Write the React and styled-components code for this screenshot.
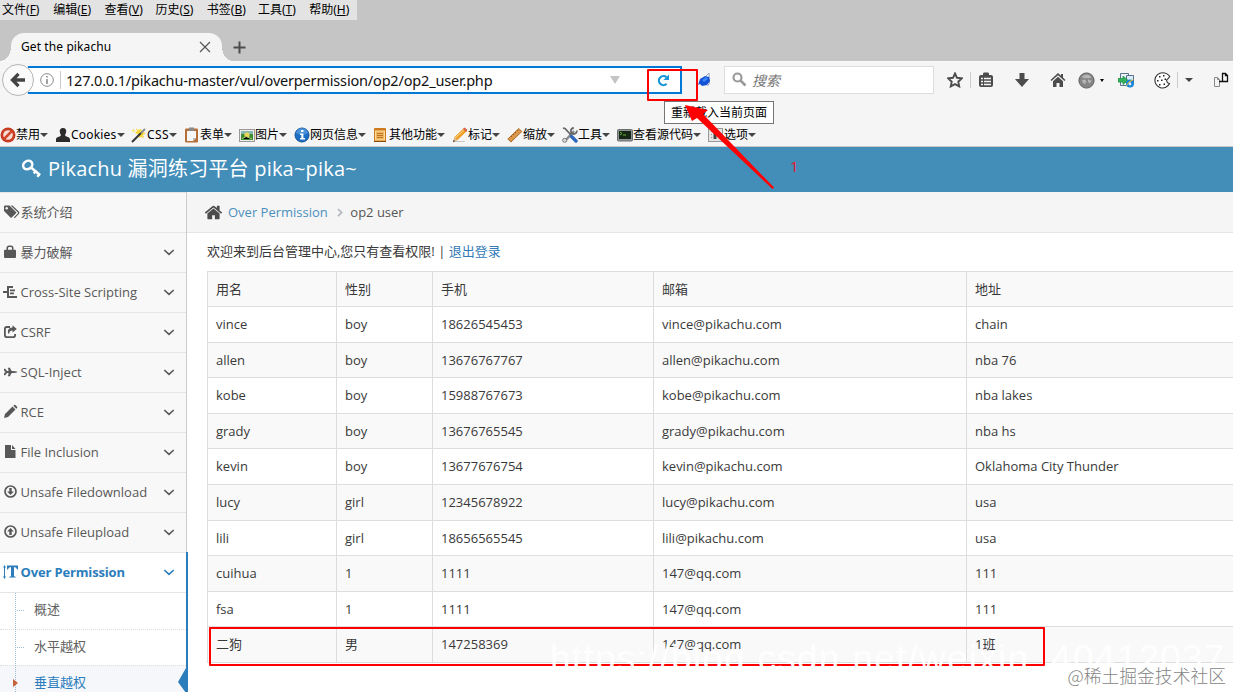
import React from "react";
import styled, { createGlobalStyle, css } from "styled-components";

const GlobalStyle = createGlobalStyle`
  * {
    box-sizing: border-box;
  }

  body {
    margin: 0;
    overflow: hidden;
    background: #fff;
    font-family: "Open Sans", "Noto Sans CJK SC", sans-serif;
    font-size: 13px;
    color: #393939;
  }
`;

const Window = styled.div`
  position: relative;
  display: flex;
  flex-direction: column;
  width: 1233px;
  height: 692px;
  overflow: hidden;
`;

/* browser chrome */

const TitleArea = styled.div`
  height: 61px;
  background: #c5c5c5;
  font-family: "Noto Sans", "Noto Sans CJK SC", sans-serif;
  color: #000;
`;

const MenuBar = styled.div`
  display: flex;
  align-items: center;
  width: 357px;
  height: 20px;
  padding-left: 2px;
  background: #e3e3e3;
  font-size: 12px;
`;

const MenuEntry = styled.div`
  flex: none;
  width: 51.2px;
  line-height: 20px;
  white-space: nowrap;
`;

const TabStrip = styled.div`
  display: flex;
  align-items: center;
  height: 41px;
  padding: 13px 0 0 11px;
`;

const Tab = styled.div`
  position: relative;
  display: flex;
  align-items: center;
  justify-content: space-between;
  width: 211px;
  height: 28px;
  padding: 0 11px 0 10px;
  background: #f5f5f5;
  border-radius: 13px 13px 0 0;
  font-size: 12px;

  &::before,
  &::after {
    content: "";
    position: absolute;
    bottom: 0;
    width: 11px;
    height: 14px;
  }

  &::before {
    left: -11px;
    background: radial-gradient(ellipse 11px 14px at 0 0, #c5c5c5 98%, #f5f5f5);
  }

  &::after {
    right: -11px;
    background: radial-gradient(
      ellipse 11px 14px at 100% 0,
      #c5c5c5 98%,
      #f5f5f5
    );
  }
`;

const TabTitle = styled.span`
  padding-bottom: 2px;
  letter-spacing: 0.1px;
`;

const NewTab = styled.svg`
  margin-left: 11px;
`;

const NavBar = styled.div`
  display: flex;
  align-items: center;
  height: 62px;
  padding: 2px 0 27px 2px;
  background: #f5f5f5;
  border-top: 1px solid #f9f9f9;
`;

const BackButton = styled.div`
  z-index: 1;
  display: flex;
  align-items: center;
  justify-content: center;
  flex: none;
  width: 32px;
  height: 32px;
  border: 1px solid #b5b5b5;
  border-radius: 50%;
  background: #fafafa;
`;

const AddressBar = styled.div`
  display: flex;
  align-items: center;
  flex: none;
  width: 654px;
  height: 28px;
  margin-left: -6px;
  padding-left: 12px;
  border: 2px solid #0078d7;
  border-left: none;
  background: #fff;
`;

const AddressDivider = styled.div`
  width: 1px;
  height: 18px;
  margin: 0 5px 0 6px;
  background: #ccc;
`;

const Url = styled.span`
  flex: 1;
  font-family: "Noto Sans", sans-serif;
  font-size: 14.5px;
  letter-spacing: -0.18px;
  color: #111;
  white-space: nowrap;
`;

const Dropmark = styled.i`
  flex: none;
  width: 0;
  height: 0;
  border: solid transparent;
  border-width: ${(props) => props.$tall || props.$size}px
    ${(props) => props.$size}px 0;
  border-top-color: ${(props) => props.$color || "#444"};
`;

const ReloadSlot = styled.div`
  display: flex;
  width: 60px;
  padding-left: 37px;
`;

const Plugin = styled.div`
  display: flex;
  width: 42px;
  padding-left: 14px;
`;

const SearchBox = styled.div`
  display: flex;
  align-items: center;
  gap: 5px;
  width: 210px;
  height: 28px;
  padding: 0 0 1px 7px;
  border: 1px solid #ddd;
  background: #fff;
  font-size: 14px;
  font-style: italic;
  color: #777;
`;

const NavIcons = styled.div`
  display: flex;
  align-items: center;
  height: 28px;
`;

const NavIcon = styled.div`
  display: flex;
  align-items: center;
  flex: none;
  margin-left: ${(props) => props.$gap}px;
`;

const NavLine = styled.div`
  width: 1px;
  height: 16px;
  margin-left: ${(props) => props.$gap}px;
  background: #ccc;
`;

const DevBar = styled.div`
  display: flex;
  align-items: center;
  height: 24px;
  background: #f5f5f5;
  border-bottom: 1px solid #c8c8c8;
  font-family: "Noto Sans", "Noto Sans CJK SC", sans-serif;
  font-size: 12px;
  color: #000;
`;

const DevItem = styled.div`
  display: flex;
  align-items: center;
  flex: none;
  width: ${(props) => props.$width}px;
  line-height: 20px;
  white-space: nowrap;
  letter-spacing: ${(props) => props.$spacing || 0}px;

  svg {
    flex: none;
  }
`;

/* the web page */

const Banner = styled.header`
  display: flex;
  align-items: center;
  gap: 7px;
  height: 45px;
  padding: 0 0 4px 21px;
  background: #438eb9;
  color: #fff;
  font-size: 20px;
  letter-spacing: 0.2px;
  white-space: nowrap;
`;

const Content = styled.div`
  display: flex;
  height: 500px;
`;

const Sidebar = styled.nav`
  flex: none;
  width: 188px;
`;

const SideGroup = styled.div`
  width: 187px;
  background: #f8f8f8;
  border-right: 1px solid #ccc;
`;

const SideItem = styled.div`
  display: flex;
  align-items: center;
  height: 40px;
  padding: 0 11px 1px 3px;
  border-top: 1px solid #e5e5e5;
  color: #585858;
  white-space: nowrap;

  span {
    flex: 1;
    line-height: 18px;
    padding: 0 0 1px 0.5px;
  }

  svg {
    flex: none;
  }

  ${(props) =>
    props.$active &&
    css`
      height: 41px;
      border-bottom: 1px solid #e5e5e5;
      color: #2b7dbc;
      font-weight: 700;
      letter-spacing: -0.15px;
    `}
`;

const ActiveGroup = styled.div`
  width: 188px;
  height: 140px;
  background: #fff;
  border-right: 2px solid #2b7dbc;
`;

const SubMenu = styled.div`
  position: relative;

  &::before {
    content: "";
    position: absolute;
    z-index: 1;
    left: 15px;
    top: 0;
    bottom: 0;
    border-left: 1px dotted #9dbdd6;
  }
`;

const SubItem = styled.div`
  position: relative;
  display: flex;
  align-items: center;
  height: 36px;
  padding: 0 0 4px 34px;
  border-top: ${(props) => (props.$first ? "none" : "1px dotted #ddd")};
  color: #616161;
  line-height: 18px;

  &::before {
    content: "";
    position: absolute;
    left: 17px;
    top: 17px;
    width: 7px;
    border-top: 1px dotted #9dbdd6;
  }

  ${(props) =>
    props.$selected &&
    css`
      height: 27px;
      padding: 4px 0 0 34px;
      align-items: flex-start;
      line-height: 25px;
      background: #f5f7fa;
      color: #2b7dbc;

      &::before {
        z-index: 2;
        left: 13px;
        top: 13px;
        width: 0;
        border: solid transparent;
        border-width: 4px 0 4px 5px;
        border-left-color: #c86139;
      }

      &::after {
        content: "";
        position: absolute;
        right: 0;
        top: 2px;
        border: solid transparent;
        border-width: 14px 8px 11px 0;
        border-right-color: #2b7dbc;
      }
    `}
`;

const Main = styled.main`
  flex: 1;
  min-width: 0;
  margin-left: -1px;
  overflow: hidden;
`;

const Breadcrumb = styled.div`
  display: flex;
  align-items: center;
  height: 41px;
  padding-left: 17px;
  background: #f5f5f5;
  border-bottom: 1px solid #e5e5e5;
  color: #555;
`;

const Link = styled.a`
  margin-left: ${(props) => props.$gap || 0}px;
  color: ${(props) => props.$color || "#337ab7"};
`;

const Welcome = styled.div`
  height: 38px;
  padding-left: 20px;
  line-height: 36px;
`;

const Table = styled.table`
  width: 1200px;
  margin-left: 20px;
  border-collapse: collapse;
  table-layout: fixed;
  line-height: 18.57px;

  td {
    height: 35.57px;
    padding: 8px;
    border: 1px solid #ddd;
  }

  tr:first-child td {
    height: 35.2px;
    padding: 7.5px 8px;
  }

  tr:nth-child(odd) {
    background: #f9f9f9;
  }
`;

const Col = styled.col`
  width: ${(props) => props.$width}px;
`;

/* notes drawn over the window */

const Tooltip = styled.div`
  position: absolute;
  left: 664px;
  top: 101px;
  width: 110px;
  height: 23px;
  border: 1px solid #767676;
  background: #fff;
  color: #000;
  font-family: "Noto Sans CJK SC", sans-serif;
  font-size: 12px;
  line-height: 20px;
  text-align: center;
`;

const RedBox = styled.div`
  position: absolute;
  left: ${(props) => props.$x}px;
  top: ${(props) => props.$y}px;
  width: ${(props) => props.$w}px;
  height: ${(props) => props.$h}px;
  border: 2px solid #f00;
  border-radius: 1px;
`;

const RedArrow = styled.svg`
  position: absolute;
  left: 680px;
  top: 100px;
`;

const RedNumber = styled.div`
  position: absolute;
  left: 790px;
  top: 156px;
  color: #e8112d;
  font-size: 15px;
  line-height: 20px;
`;

const BlogMark = styled.div`
  position: absolute;
  left: 550px;
  top: 637px;
  font-family: "Liberation Sans", sans-serif;
  font-size: 37px;
  line-height: 44px;
  letter-spacing: 1.25px;
  color: rgba(255, 255, 255, 0.94);
  white-space: nowrap;
`;

const SiteMark = styled.div`
  position: absolute;
  right: 7px;
  top: 663px;
  font-family: "Noto Sans CJK SC", sans-serif;
  font-size: 17.8px;
  font-weight: 300;
  line-height: 24px;
  color: #858585;
  text-shadow: 1px 1px 1px #fff;
  white-space: nowrap;
`;

const menus = [
  ["文件", "F"],
  ["编辑", "E"],
  ["查看", "V"],
  ["历史", "S"],
  ["书签", "B"],
  ["工具", "T"],
  ["帮助", "H"],
];

const devIcons = {
  ban: (
    <>
      <circle cx="8" cy="8" r="7.5" fill="#c93a22" />
      <circle cx="8" cy="8" r="4.8" fill="#f7dcd4" />
      <path d="M4.200 11.800 11.800 4.200" stroke="#d2462c" strokeWidth="2.600" />
    </>
  ),
  person: (
    <path
      d="M8 1c2.500 0 3.600 1.800 3.200 4-.3 1.500-1 2-1 3.400 0 1.400 4.800 1 4.800 4V15H1v-2.600c0-3 4.800-2.600 4.800-4 0-1.400-.7-1.900-1-3.400C4.400 2.800 5.500 1 8 1z"
      fill="#2b2b2b"
    />
  ),
  wand: (
    <>
      <path
        d="m5 1 2 2 3-1 1 3 4 1-3 2 1 3-3-1-2 1V8L4 6l2-2z"
        fill="#f5d93c"
      />
      <path d="m2 1 1 2 2 .5-2 .8-.7 2-.6-2-1.700-.8L2 3z" fill="#f7e46b" />
      <path d="M1 15 10 6" stroke="#333" strokeWidth="2" />
      <path d="m10 6 4-4" stroke="#8d8d8d" strokeWidth="2" />
    </>
  ),
  clip: (
    <>
      <rect x="1" y="1.500" width="13" height="14" rx="1" fill="#b5703a" />
      <path d="M3 4h9v7l-3 3H3z" fill="#f6f6f6" />
      <path d="M9 14v-3h3z" fill="#b9b9b9" />
      <rect x="5" y=".5" width="5" height="3.500" fill="#8a8a8a" />
    </>
  ),
  image: (
    <>
      <rect x=".5" y="2.500" width="15" height="12" fill="#eee" stroke="#999" />
      <rect x="2" y="4" width="12" height="9" fill="#3c8a32" />
      <path d="M2 4h12v3H2z" fill="#8ab7ad" />
      <circle cx="8" cy="8" r="2.600" fill="#ecd65a" />
      <path d="M3 12 7 9.500l6 2.500" stroke="#b7d06a" />
    </>
  ),
  info: (
    <>
      <circle cx="8" cy="8" r="7" fill="#1b6fc4" stroke="#155192" />
      <path d="M2 6a6.200 6.200 0 0 1 12 0q-6 3-12 0z" fill="#4b93d8" />
      <path d="M7 3h2.500v2H7zM6 6.500h3.400V11H11v1.500H6V11h1.300V8H6z" fill="#fff" />
    </>
  ),
  box: (
    <>
      <rect x="1" y="1" width="12" height="14" rx="1" fill="#cf7a1c" />
      <rect x="2.500" y="4" width="9" height="9" fill="#f0b763" stroke="#fbdc9e" />
      <path d="M4 6.500h6M4 8.500h6M4 10.500h6" stroke="#bf7420" />
      <path d="M1 14.500h12" stroke="#8c4a0b" />
    </>
  ),
  pencil: (
    <>
      <path d="M2 14.500h11" stroke="#c9c9c9" />
      <path d="m1 15 1.500-5L12 1l3 3-9.500 9z" fill="#eda02b" />
      <path d="m3 11 9-8" stroke="#fbd67c" />
      <path d="m11 2 1.500-1.500L15.500 3 14 5z" fill="#d6604b" />
      <path d="m1 15 1.500-5L5.500 13z" fill="#dcb98b" />
      <path d="m1 15 .7-2 1.300 1.300z" fill="#222" />
    </>
  ),
  ruler: (
    <>
      <path d="m.8 12 11-10.500 3 3L4 15z" fill="#d9954a" stroke="#b06f2c" />
      <path d="m4 9 1 1M6 7l1 1M8 5l1 1M10 3l1 1" stroke="#824813" strokeWidth=".7" />
    </>
  ),
  tools: (
    <>
      <path d="M3 14 12 4" stroke="#858b91" strokeWidth="2.400" />
      <path d="M14.800 3.500a3 3 0 1 1-3-2.500M1 1l2 .5L9 8" fill="none" stroke="#666" strokeWidth="1.800" />
      <path d="m9.500 9.500 4.500 4.500" stroke="#2e66bd" strokeWidth="3.400" strokeLinecap="round" />
      <circle cx="2.700" cy="13.300" r="2" fill="#ddd" stroke="#777" />
    </>
  ),
  terminal: (
    <>
      <rect x=".5" y="2.500" width="15" height="11.500" rx="1" fill="#8f9499" stroke="#6c6c6c" />
      <rect x="2" y="4" width="12" height="8" fill="#152615" />
      <path d="m3 5 2 1.500L3 8M6 8h3" fill="none" stroke="#67b63c" />
    </>
  ),
  options: (
    <>
      <rect x=".5" y="1.500" width="14" height="13" fill="#e4e4e4" stroke="#9a9a9a" />
      <path d="M3.500 4v9M11.500 4v9" stroke="#999" strokeDasharray="1 2" />
      <path d="M5.500 4h3v8h-3z" fill="#444" />
    </>
  ),
};

const devItems = [
  { label: "禁用", icon: "ban", width: 55 },
  { label: "Cookies", icon: "person", width: 76, spacing: 0.2 },
  { label: "CSS", icon: "wand", width: 53, spacing: 0.4 },
  { label: "表单", icon: "clip", width: 55 },
  { label: "图片", icon: "image", width: 55 },
  { label: "网页信息", icon: "info", width: 79 },
  { label: "其他功能", icon: "box", width: 79 },
  { label: "标记", icon: "pencil", width: 55 },
  { label: "缩放", icon: "ruler", width: 55 },
  { label: "工具", icon: "tools", width: 55 },
  { label: "查看源代码", icon: "terminal", width: 91 },
  { label: "选项", icon: "options", width: 55 },
];

const sideIcons = {
  tags: (
    <>
      <path d="M1 2.500Q1 1.500 2 1.500h4.500L13 8q.6.600 0 1.200L8.700 13.500q-.6.600-1.200 0L1 7z" />
      <path d="M8.500 1.500 15.600 8.300q.5.500 0 1l-4.300 4.500" fill="none" stroke="currentColor" strokeWidth="1.200" />
      <circle cx="3.700" cy="4.200" r="1.200" fill="#f8f8f8" />
    </>
  ),
  lock: (
    <path d="M1 6.800q0-1 1-1h1.500V4q0-2.600 2.600-2.600h1.800Q10.500 1.400 10.500 4v1.800H12q1 0 1 1V13q0 1-1 1H2q-1 0-1-1zM5 5.800h4V4.300Q9 3 7.700 3H6.300Q5 3 5 4.300z" />
  ),
  align: (
    <path d="M0 7h4v2H0zM4 2h2v12H4zM6 2h4v2H6zM7 5.500h5v1.800H7zM7 8.500h4v1.800H7zM6 12h8v2H6z" />
  ),
  share: (
    <>
      <path
        d="M7 3H3.800Q1.900 3 1.900 4.800v6.400q0 1.900 1.900 1.900h6.400q1.900 0 1.900-1.900V10"
        fill="none"
        stroke="currentColor"
        strokeWidth="1.800"
      />
      <path d="M9.500 1.200 13.800 5 9.500 8.600V6.400Q6.300 6.300 6 10.300 4.600 8.800 4.900 7q.5-3 4.600-3.400z" />
    </>
  ),
  jet: (
    <path d="M1 4.800h1.200L4 7h1.600L5.200 4.500H4.800V3.700h2.400v.8L8.700 7q4.800.1 5.600 1-.8.900-5.600 1l-1.500 2.500v.8H4.800v-.8h.4L5.600 9H4l-1.800 2.200H1V9.300h.6V8.600L3 8l-1.400-.6v-.7H1z" />
  ),
  pencil: (
    <path d="m1 14 1-4L9.500 2.500l3 3L5 13zM10.300 1.700l.8-.8q.6-.5 1.200 0l1.800 1.800q.5.600 0 1.200l-.8.8z" />
  ),
  file: <path d="M2 1h6v5h4.500v8H2zM9 1l3.500 4H9z" />,
  down: (
    <>
      <circle cx="7.500" cy="7.500" r="5.500" fill="none" stroke="currentColor" strokeWidth="1.700" />
      <path d="M6.300 4h2.400v3.400h2.200L7.500 11 4.100 7.400h2.200z" />
    </>
  ),
  up: (
    <>
      <circle cx="7.500" cy="7.500" r="5.500" fill="none" stroke="currentColor" strokeWidth="1.700" />
      <path d="M6.300 11h2.400V7.600h2.200L7.500 4 4.100 7.600h2.200z" />
    </>
  ),
  height: (
    <path d="M1.500 1 0 3.500h1v9H0L1.500 15 3 12.500H2v-9h1zM4 1.500h11v4h-1q-.2-2.300-3-2.500v8.700q0 .9 1.700 1v.8H6.300v-.8q1.700-.1 1.700-1V3Q5.200 3.200 5 5.500H4z" />
  ),
};

const sideItems = [
  { label: "系统介绍", icon: "tags", leaf: true },
  { label: "暴力破解", icon: "lock" },
  { label: "Cross-Site Scripting", icon: "align" },
  { label: "CSRF", icon: "share" },
  { label: "SQL-Inject", icon: "jet" },
  { label: "RCE", icon: "pencil" },
  { label: "File Inclusion", icon: "file" },
  { label: "Unsafe Filedownload", icon: "down" },
  { label: "Unsafe Fileupload", icon: "up" },
];

const rows = [
  ["用名", "性别", "手机", "邮箱", "地址"],
  ["vince", "boy", "18626545453", "vince@pikachu.com", "chain"],
  ["allen", "boy", "13676767767", "allen@pikachu.com", "nba 76"],
  ["kobe", "boy", "15988767673", "kobe@pikachu.com", "nba lakes"],
  ["grady", "boy", "13676765545", "grady@pikachu.com", "nba hs"],
  ["kevin", "boy", "13677676754", "kevin@pikachu.com", "Oklahoma City Thunder"],
  ["lucy", "girl", "12345678922", "lucy@pikachu.com", "usa"],
  ["lili", "girl", "18656565545", "lili@pikachu.com", "usa"],
  ["cuihua", "1", "1111", "147@qq.com", "111"],
  ["fsa", "1", "1111", "147@qq.com", "111"],
  ["二狗", "男", "147258369", "147@qq.com", "1班"],
];

const HOME_PATH =
  "M1472 992v480q0 26-19 45t-45 19h-384v-384h-256v384h-384q-26 0-45-19t-19-45v-480q0-1 .5-3t.5-3l575-474 575 474q1 2 1 6zm223-69l-62 74q-8 9-21 11h-3q-13 0-21-7l-692-577-692 577q-12 8-24 7-13-2-21-11l-62-74q-8-10-7-23.500t11-21.500l719-599q32-26 76-26t76 26l244 204v-195q0-14 9-23t23-9h192q14 0 23 9t9 23v408l219 182q10 8 11 21.500t-7 23.500z";

function Chevron() {
  return (
    <svg width="12" height="12" viewBox="0 0 12 12">
      <path d="m1.300 4 4.700 4.300L10.700 4" fill="none" stroke="currentColor" strokeWidth="1.600" />
    </svg>
  );
}

function SideRow({ label, icon, leaf, active }) {
  return (
    <SideItem $active={active}>
      <svg width="17" height="16" viewBox="0 0 17 16" fill="currentColor">
        {sideIcons[icon]}
      </svg>
      <span>{label}</span>
      {!leaf && <Chevron />}
    </SideItem>
  );
}

function NavBarIcons() {
  return (
    <NavIcons>
      <NavIcon $gap={13}>
        <svg width="16" height="16" viewBox="0 0 16 16">
          <path
            d="m8 1.500 2 4.300 4.800.6-3.500 3.300.9 4.700L8 12.100l-4.200 2.300.9-4.700L1.200 6.400 6 5.800z"
            fill="none"
            stroke="#4c4c4c"
            strokeWidth="1.900"
          />
        </svg>
      </NavIcon>
      <NavLine $gap={7} />
      <NavIcon $gap={7}>
        <svg width="16" height="16" viewBox="0 0 16 16" fill="#4c4c4c">
          <path d="M3 3h2V2q0-1.500 1-1.500h4q1 0 1 1.500v1h2q2 0 2 2v8q0 2-2 2H3q-2 0-2-2V5q0-2 2-2z" />
          <path d="M3 6.500h2M3 9.500h2M3 12.500h2M6 6.500h7M6 9.500h7M6 12.500h7" stroke="#f5f5f5" strokeWidth="1.500" />
        </svg>
      </NavIcon>
      <NavIcon $gap={20}>
        <svg width="16" height="16" viewBox="0 0 16 16" fill="#4c4c4c">
          <path d="M5.500 1h5v6H15l-7 8-7-8h4.500z" />
        </svg>
      </NavIcon>
      <NavIcon $gap={20}>
        <svg width="16" height="16" viewBox="0 0 16 16" fill="#4c4c4c">
          <path d="M8 1 .5 8l1 1L8 3.300 14.500 9l1-1L13 5.600V2h-2v1.800z" />
          <path d="M3 9.200 8 4.800l5 4.400V15H9.500v-4h-3v4H3z" />
        </svg>
      </NavIcon>
      <NavIcon $gap={12}>
        <svg width="17" height="17" viewBox="0 0 17 17">
          <circle cx="8.500" cy="8.500" r="7.600" fill="#858585" stroke="#606060" />
          <path d="M3.500 5q5-5 10 0-1.500 2-3.500 1-3 1-6.500-1z" fill="#b5b5b5" />
          <path d="m4 8 3-.5 1.500 2L7 12l-2-1zM10 7.500l3.500 1-1.500 3-2-1.500z" fill="#b5b5b5" />
        </svg>
      </NavIcon>
      <NavIcon $gap={5}>
        <Dropmark $size={2} $tall={3} $color="#000" />
      </NavIcon>
      <NavIcon $gap={14}>
        <svg width="17" height="16" viewBox="0 0 17 16">
          <path d="M2.500 1.500h8v12h-8z" fill="#eef5fc" stroke="#57718a" />
          <path d="M8.500 3.500h7v8h-7z" fill="#dcecfa" stroke="#57718a" />
          <path d="M0 6.500h5V4l5 4.300-5 4.200V10H0z" fill="#34b25c" stroke="#148a3a" strokeWidth=".7" />
          <circle cx="12" cy="11.500" r="4" fill="#1784d8" />
          <path d="M8 15q1-6 8.500-8Q11 10 8 15z" fill="#f3bd31" />
          <circle cx="12" cy="12" r="1.400" fill="#d9efff" />
        </svg>
      </NavIcon>
      <NavIcon $gap={19}>
        <svg width="17" height="17" viewBox="0 0 17 17">
          <path
            d="M15.800 4.500Q13 .8 8.500.8A7.600 7.600 0 1 0 15.500 11.500l-2.200-.8-.8-2.500 1.500-1.500z"
            fill="#fff"
            stroke="#333"
            strokeWidth="1.100"
          />
          <path
            d="M5 4h1.500v1.500H5zM9 3h1.500v1.500H9zM3 8h1.500v1.500H3zM7 7.500h1.500V9H7zM5 12h1.500v1.500H5zM9.500 11.500H11V13H9.500zM10.500 6.500H12V8h-1.500z"
            fill="#222"
          />
        </svg>
      </NavIcon>
      <NavLine $gap={6} />
      <NavIcon $gap={7}>
        <Dropmark $size={4} />
      </NavIcon>
      <NavIcon $gap={20}>
        <svg width="16" height="16" viewBox="0 0 16 16" fill="none">
          <path d="M1.500 5.500h3l2 2v7h-5zM4.500 5.500v2h2" stroke="#888" />
          <path d="M9.500 1.500h3l2 2v6h-5zM12.500 1.500v2h2M6 9.500h4" stroke="#111" strokeWidth="1.300" />
        </svg>
      </NavIcon>
    </NavIcons>
  );
}

function BrowserChrome() {
  return (
    <>
      <TitleArea>
        <MenuBar>
          {menus.map(([label, key]) => (
            <MenuEntry key={key}>
              {label}(<u>{key}</u>)
            </MenuEntry>
          ))}
        </MenuBar>
        <TabStrip>
          <Tab>
            <TabTitle>Get the pikachu</TabTitle>
            <svg width="12" height="12" viewBox="0 0 12 12">
              <path d="m1 1 10 10M11 1 1 11" stroke="#555" strokeWidth="1.200" />
            </svg>
          </Tab>
          <NewTab width="13" height="13" viewBox="0 0 13 13">
            <path d="M6.500.5v12M.5 6.500h12" stroke="#4c4c4c" strokeWidth="2" />
          </NewTab>
        </TabStrip>
      </TitleArea>
      <NavBar>
        <BackButton>
          <svg width="16" height="16" viewBox="0 0 16 16">
            <path d="M8.500 1.800 2.500 8l6 6.200M3 8h12" fill="none" stroke="#444" strokeWidth="3.300" />
          </svg>
        </BackButton>
        <AddressBar>
          <svg width="14" height="14" viewBox="0 0 14 14">
            <circle cx="7" cy="7" r="6.300" fill="none" stroke="#8a8a8a" />
            <path d="M6.200 3h1.600v1.600H6.200zM6.200 6h1.600v5H6.200z" fill="#8a8a8a" />
          </svg>
          <AddressDivider />
          <Url>127.0.0.1/pikachu-master/vul/overpermission/op2/op2_user.php</Url>
          <Dropmark $size={5} $tall={8} $color="#c4c4c4" />
          <ReloadSlot>
            <svg width="13" height="13" viewBox="0 0 13 13">
              <path d="M9.600 9.800A4.500 4.500 0 1 1 9.500 3.300" fill="none" stroke="#1996d9" strokeWidth="2.200" />
              <path d="M12 .5V6H6.500z" fill="#1996d9" />
            </svg>
          </ReloadSlot>
        </AddressBar>
        <Plugin>
          <svg width="17" height="16" viewBox="0 0 17 16">
            <path d="m10 4 3-3 .5 10-2 3" fill="none" stroke="#9aa7c4" />
            <path d="m4 7 5-3 4 1 1 4-3 4-5 1-2-2-2 1z" fill="#1553d6" />
            <path d="m6 8 4-3 2 2-4 3z" fill="#3f86f5" />
          </svg>
        </Plugin>
        <SearchBox>
          <svg width="15" height="15" viewBox="0 0 15 15">
            <circle cx="5.500" cy="5.500" r="4" fill="none" stroke="#9a9a9a" strokeWidth="2.200" />
            <path d="m8.500 8.500 5 5" stroke="#9a9a9a" strokeWidth="2.600" />
          </svg>
          搜索
        </SearchBox>
        <NavBarIcons />
      </NavBar>
      <DevBar>
        {devItems.map((item) => (
          <DevItem key={item.icon} $width={item.width} $spacing={item.spacing}>
            <svg width="16" height="16" viewBox="0 0 16 16">
              {devIcons[item.icon]}
            </svg>
            {item.label}
            <Dropmark $size={4} />
          </DevItem>
        ))}
      </DevBar>
    </>
  );
}

export default function App() {
  return (
    <Window>
      <GlobalStyle />
      <BrowserChrome />
      <Banner>
        <svg width="20" height="20" viewBox="0 0 20 20" fill="none" stroke="#fff">
          <ellipse cx="6.700" cy="7" rx="4.800" ry="4" transform="rotate(-35 6.700 7)" strokeWidth="2.600" />
          <path d="m10 9.500 9 7.500" strokeWidth="2.500" />
          <path d="m12.800 15.500 2.400-3M16.300 18.800l2.400-3" strokeWidth="2.500" />
        </svg>
        Pikachu 漏洞练习平台 pika~pika~
      </Banner>
      <Content>
        <Sidebar>
          <SideGroup>
            {sideItems.map((item) => (
              <SideRow key={item.icon} {...item} />
            ))}
          </SideGroup>
          <ActiveGroup>
            <SideRow label="Over Permission" icon="height" active />
            <SubMenu>
              <SubItem $first>概述</SubItem>
              <SubItem>水平越权</SubItem>
              <SubItem $selected>垂直越权</SubItem>
            </SubMenu>
          </ActiveGroup>
        </Sidebar>
        <Main>
          <Breadcrumb>
            <svg width="19" height="19" viewBox="0 0 1792 1792" fill="#4c4c4c">
              <path d={HOME_PATH} />
            </svg>
            <Link $gap={5} $color="#4c8fbd">
              Over Permission
            </Link>
            <svg width="22.500" height="12" viewBox="0 0 22.500 12">
              <path d="m10 3 3.600 3.600L10 10.200" fill="none" stroke="#b2b6bf" strokeWidth="1.700" />
            </svg>
            op2 user
          </Breadcrumb>
          <Welcome>
            欢迎来到后台管理中心,您只有查看权限! | <Link>退出登录</Link>
          </Welcome>
          <Table>
            <colgroup>
              <Col $width={129} />
              <Col $width={96} />
              <Col $width={221} />
              <Col $width={313} />
              <Col />
            </colgroup>
            <tbody>
              {rows.map((row, index) => (
                <tr key={index}>
                  {row.map((cell, i) => (
                    <td key={i}>{cell}</td>
                  ))}
                </tr>
              ))}
            </tbody>
          </Table>
        </Main>
      </Content>
      <Tooltip>重新载入当前页面</Tooltip>
      <RedBox $x={647} $y={69} $w={51} $h={32} />
      <RedBox $x={209} $y={627} $w={836} $h={39} />
      <RedArrow width="96" height="92" viewBox="0 0 96 92">
        <path d="m5 5 23 5-5 4 71 73.500-1.500 1.500L17 18l-5 3z" fill="#f00" />
      </RedArrow>
      <RedNumber>1</RedNumber>
      <BlogMark>https://blog.csdn.net/weixin_40412037</BlogMark>
      <SiteMark>@稀土掘金技术社区</SiteMark>
    </Window>
  );
}
